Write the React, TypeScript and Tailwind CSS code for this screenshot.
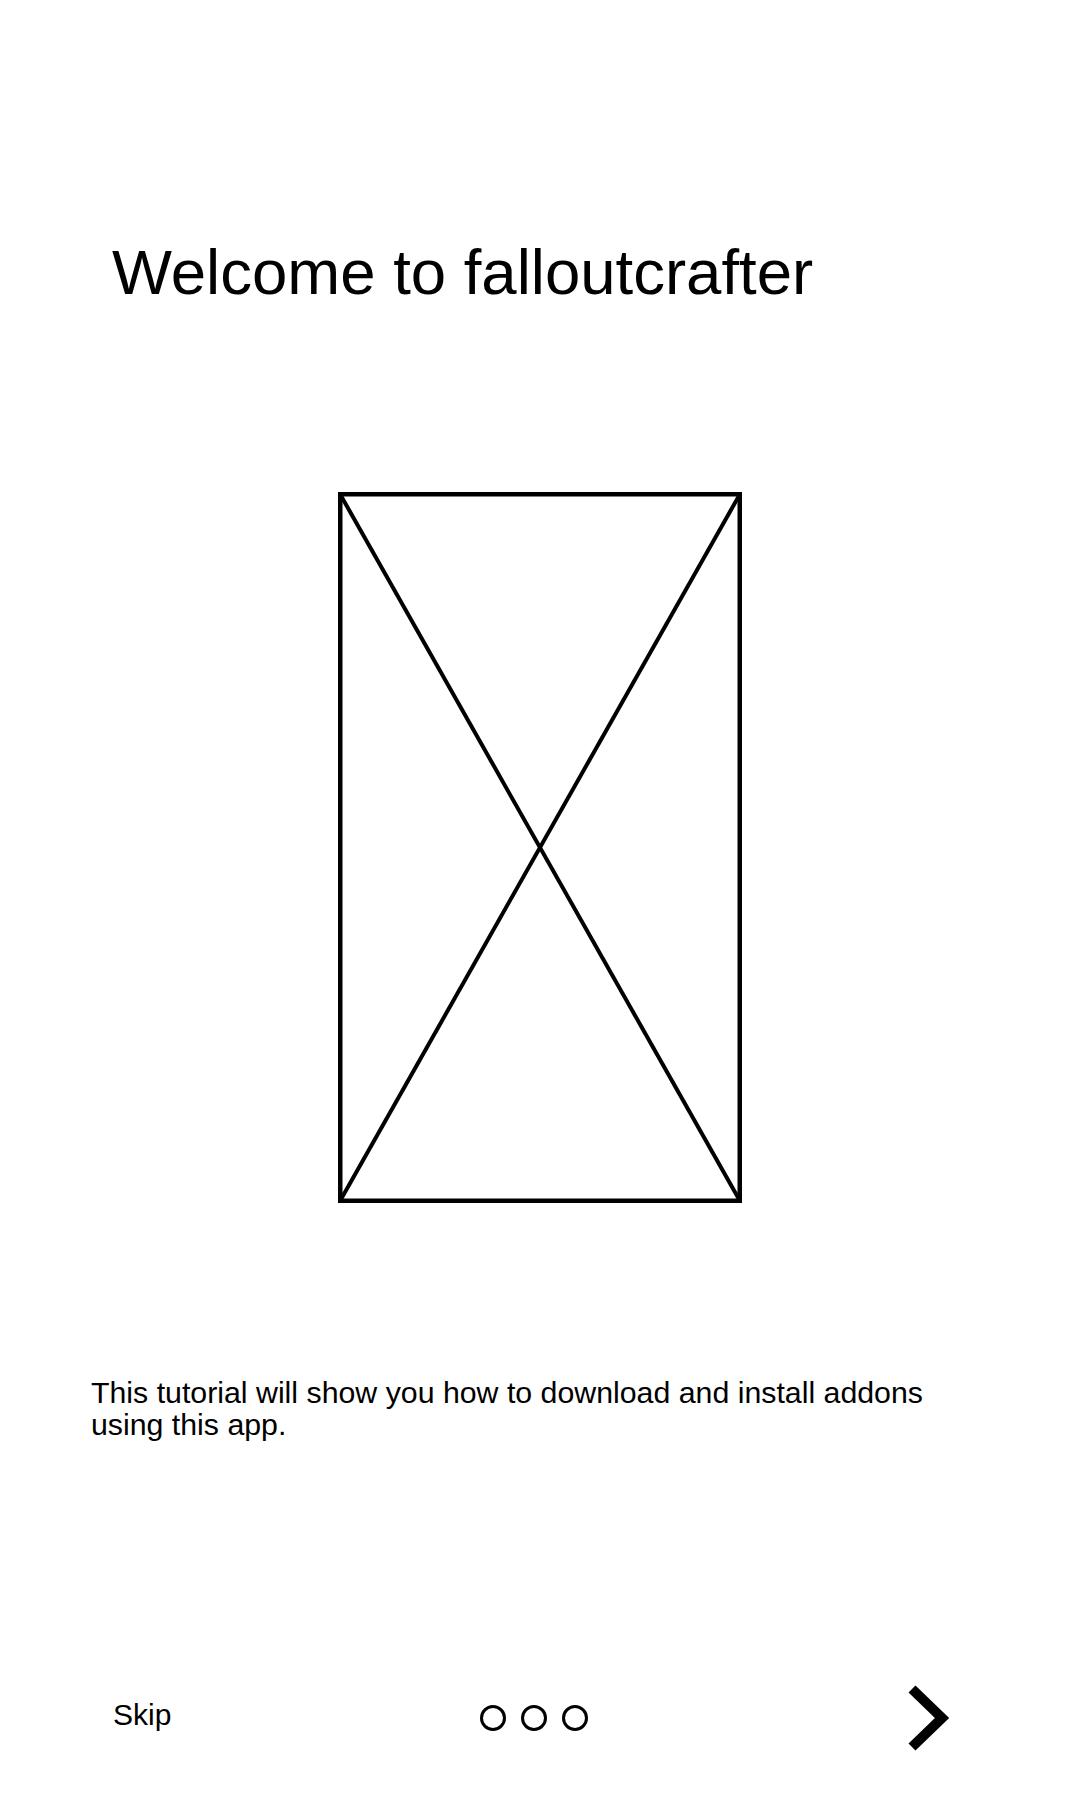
function Placeholder() {
  return (
    <svg width="404" height="711" viewBox="0 0 404 711" className="block">
      <rect x="2.25" y="2.25" width="399.5" height="706.5" fill="none" stroke="#000" strokeWidth="4.5" />
      <line x1="2" y1="2" x2="402" y2="709" stroke="#000" strokeWidth="4" />
      <line x1="402" y1="2" x2="2" y2="709" stroke="#000" strokeWidth="4" />
    </svg>
  );
}

function Chevron() {
  return (
    <svg width="46" height="66" viewBox="0 0 46 66" className="block">
      <polyline
        points="6,4 36,33 6,62"
        fill="none"
        stroke="#000"
        strokeWidth="10"
        strokeLinejoin="miter"
        strokeLinecap="butt"
      />
    </svg>
  );
}

export default function App() {
  return (
    <div
      className="w-[1080px] min-h-[1800px] bg-white text-black flex flex-col"
      style={{ fontFamily: '"Liberation Sans", Arial, sans-serif' }}
    >
      <h1 className="pl-[112px] pt-[241px] text-[63.5px] leading-none font-normal">
        Welcome to falloutcrafter
      </h1>

      <div className="mt-[187px] flex justify-center">
        <Placeholder />
      </div>

      <p className="mt-[174px] pl-[91px] w-[952px] text-[30.3px] leading-[32px]">
        This tutorial will show you how to download and install addons using this app.
      </p>

      <div className="mt-[244px] flex items-center pl-[113px]">
        <button className="w-[367px] mb-[5px] text-left text-[30px] leading-none">Skip</button>
        <div className="flex items-center gap-[15px]">
          <span className="w-[26px] h-[26px] rounded-full border-[3px] border-black" />
          <span className="w-[26px] h-[26px] rounded-full border-[3px] border-black" />
          <span className="w-[26px] h-[26px] rounded-full border-[3px] border-black" />
        </div>
        <button className="ml-[318px]" aria-label="Next">
          <Chevron />
        </button>
      </div>
    </div>
  );
}
